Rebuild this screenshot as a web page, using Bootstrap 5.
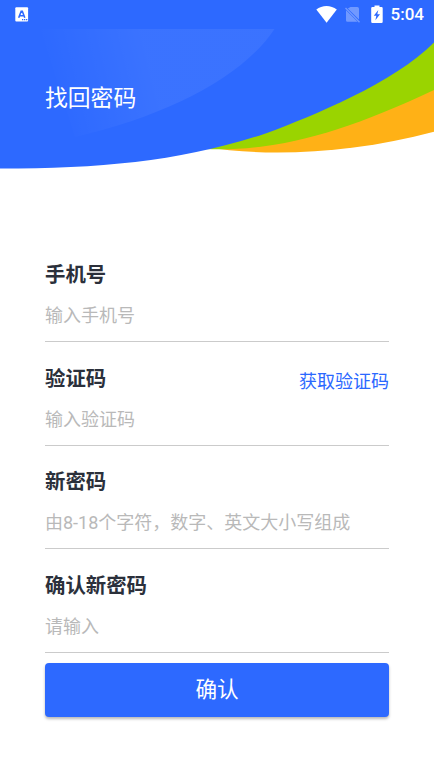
<!DOCTYPE html>
<html lang="zh-CN">
<head>
<meta charset="utf-8">
<meta name="viewport" content="width=device-width, initial-scale=1">
<title>找回密码</title>
<link rel="stylesheet" href="https://cdn.jsdelivr.net/npm/bootstrap@5.3.0/dist/css/bootstrap.min.css">
<style>
  body { font-family: Roboto, "Noto Sans CJK SC", sans-serif; color: #2b303b; }
  .screen { height: 771px; overflow: hidden; }
  .hero { height: 262px; }
  .hero-art { z-index: -1; }
  .status { height: 29px; padding: 0 10px 0 15px; font-size: 17px; line-height: 29px; font-weight: 500; }
  .page-title { font-size: 22.8px; line-height: 34px; padding: 53px 45px 0; font-weight: 400; }
  .form-area { padding: 0 45px; }
  .field { height: 103.67px; }
  .field-head { height: 27px; }
  .field-label { font-size: 20.4px; line-height: 27px; font-weight: 700; }
  .field-input { height: 53px; font-size: 18px; line-height: 26px; border-bottom: 1px solid #cbcbcb !important; padding: 3px 0 2px; }
  .field-input::placeholder { color: #b9b9b9; opacity: 1; }
  .code-link { font-size: 18px; line-height: 27px; color: #2b68ff; position: relative; top: 2px; }
  .submit { height: 54px; margin-top: -14px; background: #2d69ff !important; border: 0; border-radius: 4px; font-size: 21.6px; line-height: 54px; padding: 0; box-shadow: 0 2px 3px rgba(0,0,0,.28); }
</style>
<script src="https://cdn.jsdelivr.net/npm/bootstrap@5.3.0/dist/js/bootstrap.bundle.min.js"></script>
</head>
<body class="bg-white">
<main class="screen position-relative">
  <header class="hero position-relative z-0 text-white">
    <svg class="hero-art position-absolute top-0 start-0" width="434" height="180" viewBox="0 0 434 180" aria-hidden="true">
      <defs>
        <linearGradient id="sheen" gradientUnits="userSpaceOnUse" x1="52" y1="93" x2="150" y2="69">
          <stop offset="0" stop-color="#fff" stop-opacity="0"/>
          <stop offset="1" stop-color="#fff" stop-opacity=".065"/>
        </linearGradient>
      </defs>
      <path fill="#ffb116" d="M205 147C265 157 351 154 434 131.7V80H300Z"/>
      <path fill="#9ad400" d="M205 149C275 152 343 133 434 90V35H300Z"/>
      <path fill="#2d69ff" d="M0 0H434V42.5C394 83 312 116 267 133C183 161 104 168.6 0 168.6Z"/>
      <path fill="url(#sheen)" d="M40 29H274.500C242 78 166 116 75 137Z"/>
    </svg>
    <div class="status d-flex align-items-center justify-content-between">
      <svg width="14" height="15" viewBox="0 0 14 15" aria-hidden="true">
        <rect x=".3" y=".2" width="12.8" height="14.4" rx="1" fill="#fff"/>
        <path d="M3.700 10.700 6.200 4.200H7.300L9.800 10.700M4.700 8.700H8.900" fill="none" stroke="#2d69ff" stroke-width="1.6"/>
        <path d="M7 12.700h1.300M9 12.700h1.300M11 12.700h1.300" stroke="#2d69ff" stroke-width="1.200"/>
      </svg>
      <div class="d-flex align-items-center">
        <svg width="75" height="29" viewBox="0 0 75 29" aria-hidden="true">
          <path fill="#fff" d="M.3 9.500C6 4.800 15 4.800 20.800 9.500L10.600 22.700Z"/>
          <g fill="#fff" opacity=".32"><path d="M34.500 7H41.300Q43 7 43 8.700V19.500L31.800 8.500ZM30 10.200 41.500 21.800H31.500Q30 21.800 30 20.300Z"/><path d="M29 8.500 30 7.500 44 21.800 43 22.800Z"/></g>
          <path fill="#fff" fill-rule="evenodd" d="M58.500 5.500H63.500V7H65.500Q66.700 7 66.700 8.200V21.700Q66.700 23 65.500 23H56.400Q55.200 23 55.200 21.700V8.200Q55.200 7 56.400 7H58.500ZM62.300 10 57.800 15.800H60.300L59.400 20.300 64 14.200H61.300Z"/>
        </svg>
        <span class="clock">5:04</span>
      </div>
    </div>
    <h1 class="page-title m-0">找回密码</h1>
  </header>

  <form class="form-area">
    <div class="field">
      <div class="field-head d-flex justify-content-between"><label class="field-label" for="phone">手机号</label></div>
      <input id="phone" type="tel" class="field-input form-control border-0 rounded-0 bg-transparent shadow-none" placeholder="输入手机号">
    </div>
    <div class="field">
      <div class="field-head d-flex justify-content-between"><label class="field-label" for="code">验证码</label><a href="#" class="code-link text-decoration-none">获取验证码</a></div>
      <input id="code" type="text" class="field-input form-control border-0 rounded-0 bg-transparent shadow-none" placeholder="输入验证码">
    </div>
    <div class="field">
      <div class="field-head d-flex justify-content-between"><label class="field-label" for="pwd">新密码</label></div>
      <input id="pwd" type="password" class="field-input form-control border-0 rounded-0 bg-transparent shadow-none" placeholder="由8-18个字符，数字、英文大小写组成">
    </div>
    <div class="field">
      <div class="field-head d-flex justify-content-between"><label class="field-label" for="pwd2">确认新密码</label></div>
      <input id="pwd2" type="password" class="field-input form-control border-0 rounded-0 bg-transparent shadow-none" placeholder="请输入">
    </div>
    <button type="button" class="submit btn btn-primary w-100">确认</button>
  </form>
</main>
</body>
</html>
